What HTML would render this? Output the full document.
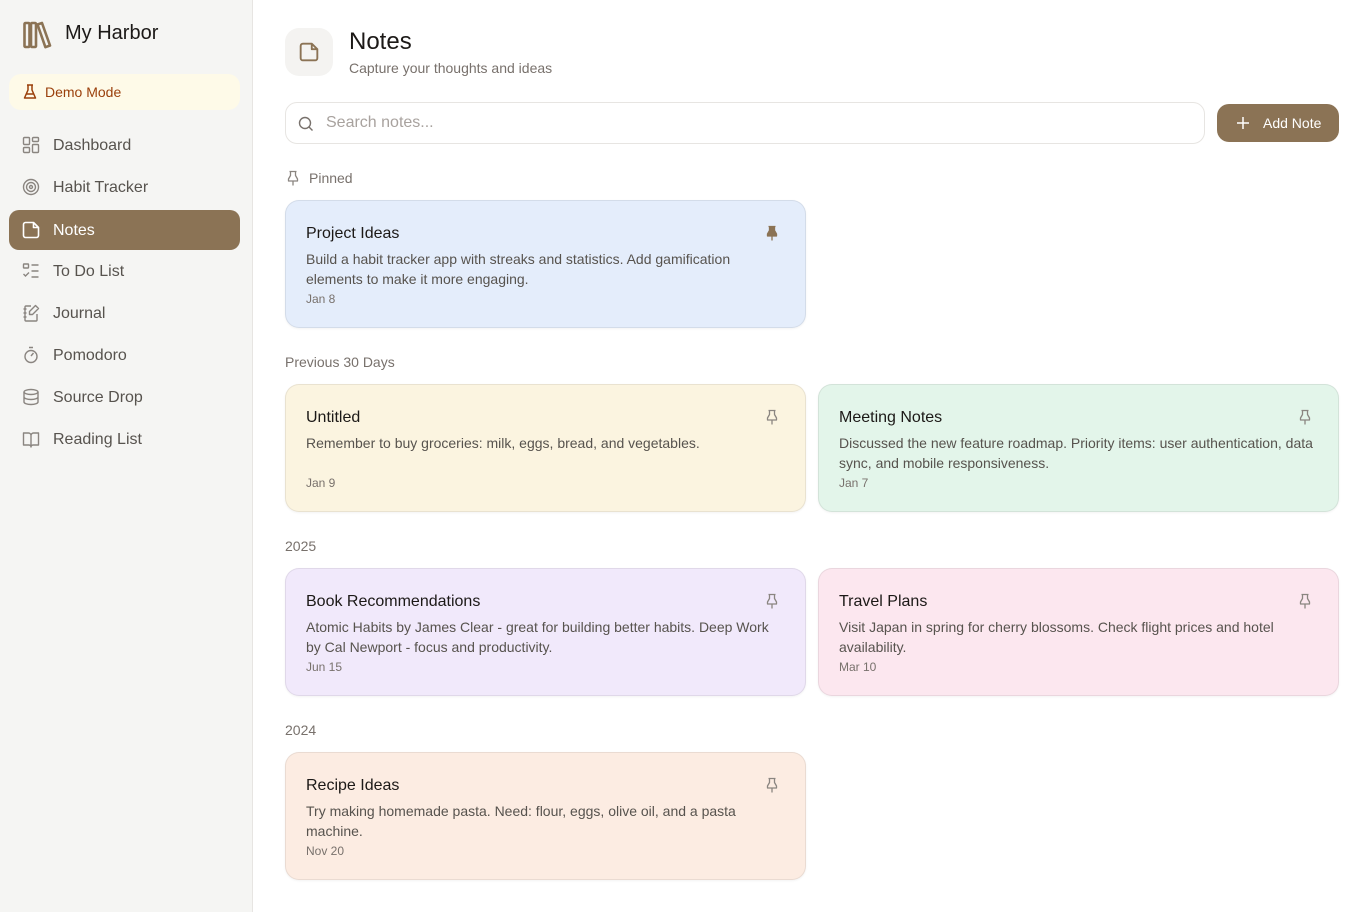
<!DOCTYPE html>
<html><head><meta charset="utf-8">
<style>
*{box-sizing:border-box;margin:0;padding:0}
body{width:1360px;height:912px;font-family:"Liberation Sans",sans-serif;background:#fff;position:relative;overflow:hidden;color:#1c1917}
.side{position:absolute;left:0;top:0;width:253px;height:912px;background:#f5f5f3;border-right:1px solid #e7e5e2}
.logo{position:absolute;left:22px;top:20px}
.brand{position:absolute;left:65px;top:22px;font-size:20px;color:#1c1917}
.demo{position:absolute;left:9px;top:74px;width:231px;height:36px;background:#fefae8;border-radius:12px;color:#9a3f0b;font-size:14px;padding:10px 0 0 36px}
.demo svg{position:absolute;left:14px;top:10px}
.nav{position:absolute;left:9px;width:231px;height:40px;border-radius:10px;font-size:16px;color:#57534e;padding:12px 0 0 44px}
.nav svg{position:absolute;left:13px;top:11px}
.nav.act{background:#8b7355;color:#fff}
.hicon{position:absolute;left:285px;top:28px;width:48px;height:48px;border-radius:14px;background:#f4f3f1}
.hicon svg{position:absolute;left:14px;top:14px}
h1{position:absolute;left:349px;top:28px;font-size:24px;font-weight:normal;color:#1c1917}
.sub{position:absolute;left:349px;top:60px;font-size:14px;color:#78716c}
.search{position:absolute;left:285px;top:102px;width:920px;height:42px;border:1px solid #e7e5e2;border-radius:12px;font-size:16px;color:#a8a29e;padding:11px 0 0 40px}
.search svg{position:absolute;left:12px;top:13px}
.btn{position:absolute;left:1217px;top:104px;width:122px;height:38px;background:#8b7355;border-radius:12px;color:#fff;font-size:14px;padding:11px 0 0 46px}
.btn svg{position:absolute;left:19px;top:12px}
.lbl{position:absolute;left:285px;font-size:14px;color:#78716c}
.card{position:absolute;width:521px;height:128px;border-radius:14px;border:1px solid rgba(0,0,0,0.07);box-shadow:0 1px 2px rgba(0,0,0,0.05);padding:0 20px}
.card .t{position:absolute;left:20px;top:24px;font-size:16px;color:#1c1917}
.card .b{position:absolute;left:20px;top:48px;width:480px;font-size:14px;line-height:20px;color:#57534e}
.card .d{position:absolute;left:20px;top:91px;font-size:12px;color:#78716c}
.card svg{position:absolute;left:479px;top:24px}
</style></head><body>
<div class="side">
 <svg class="logo" width="30" height="30" viewBox="0 0 30 30" fill="none" stroke="#8b7355" stroke-width="2.6" stroke-linejoin="round"><rect x="2.5" y="3" width="5" height="24" rx="1"/><rect x="9" y="3" width="5" height="24" rx="1"/><path d="M15.5 4.5l4.5-1.5 8 22.5-4.6 1.7z"/></svg>
 <div class="brand">My Harbor</div>
 <div class="demo"><svg width="14" height="16" viewBox="0 0 14 16" fill="none" stroke="#9a3f0b" stroke-width="1.5" stroke-linejoin="round"><path d="M4 1h6M5 1v5L1.5 14h11L9 6V1M3 10h8"/></svg>Demo Mode</div>
 <div class="nav" style="top:125px"><svg width="18" height="18" viewBox="0 0 18 18" fill="none" stroke="#8a8580" stroke-width="1.4"><rect x="1.5" y="1.5" width="6" height="7" rx="1"/><rect x="10.5" y="1.5" width="6" height="4" rx="1"/><rect x="10.5" y="8.5" width="6" height="8" rx="1"/><rect x="1.5" y="11.5" width="6" height="5" rx="1"/></svg>Dashboard</div>
 <div class="nav" style="top:167px"><svg width="18" height="18" viewBox="0 0 18 18" fill="none" stroke="#8a8580" stroke-width="1.4"><circle cx="9" cy="9" r="7.5"/><circle cx="9" cy="9" r="4.5"/><circle cx="9" cy="9" r="1.5"/></svg>Habit Tracker</div>
 <div class="nav act" style="top:210px"><svg width="18" height="18" viewBox="0 0 18 18" fill="none" stroke="#fff" stroke-width="1.6" stroke-linejoin="round"><path d="M3.5 1.5h8l5 5v8a2 2 0 0 1-2 2h-11a2 2 0 0 1-2-2v-11a2 2 0 0 1 2-2zM11.5 1.5v5h5"/></svg>Notes</div>
 <div class="nav" style="top:251px"><svg width="18" height="18" viewBox="0 0 18 18" fill="none" stroke="#8a8580" stroke-width="1.4"><rect x="1.5" y="2" width="5" height="4" rx="0.5"/><path d="M1.5 12l2 2 3.5-3.5M9.5 3h7M9.5 9h7M9.5 15h7"/></svg>To Do List</div>
 <div class="nav" style="top:293px"><svg width="18" height="18" viewBox="0 0 18 18" fill="none" stroke="#8a8580" stroke-width="1.4" stroke-linejoin="round"><path d="M9 2H4a1 1 0 0 0-1 1v13a1 1 0 0 0 1 1h10a1 1 0 0 0 1-1V10M1.5 5h3M1.5 9h3M1.5 13h3M13.5 1.5l3 3-6 6H7.5v-3z"/></svg>Journal</div>
 <div class="nav" style="top:335px"><svg width="18" height="18" viewBox="0 0 18 18" fill="none" stroke="#8a8580" stroke-width="1.4"><path d="M7 1.5h4M9 10l2.5-3"/><circle cx="9" cy="10.5" r="6"/></svg>Pomodoro</div>
 <div class="nav" style="top:377px"><svg width="18" height="18" viewBox="0 0 18 18" fill="none" stroke="#8a8580" stroke-width="1.4"><ellipse cx="9" cy="4" rx="7" ry="2.5"/><path d="M2 4v10c0 1.4 3.1 2.5 7 2.5s7-1.1 7-2.5V4M2 9c0 1.4 3.1 2.5 7 2.5s7-1.1 7-2.5"/></svg>Source Drop</div>
 <div class="nav" style="top:419px"><svg width="18" height="18" viewBox="0 0 18 18" fill="none" stroke="#8a8580" stroke-width="1.4" stroke-linejoin="round"><path d="M1.5 3h5a2.5 2.5 0 0 1 2.5 2.5V17a2 2 0 0 0-2-2H1.5zM16.5 3h-5A2.5 2.5 0 0 0 9 5.5V17a2 2 0 0 1 2-2h5.5z"/></svg>Reading List</div>
</div>

<div class="hicon"><svg width="20" height="20" viewBox="0 0 18 18" fill="none" stroke="#8b7355" stroke-width="1.7" stroke-linejoin="round"><path d="M3.5 1.5h8l5 5v8a2 2 0 0 1-2 2h-11a2 2 0 0 1-2-2v-11a2 2 0 0 1 2-2zM11.5 1.5v5h5"/></svg></div>
<h1>Notes</h1>
<div class="sub">Capture your thoughts and ideas</div>
<div class="search"><svg width="16" height="16" viewBox="0 0 16 16" fill="none" stroke="#78716c" stroke-width="1.4"><circle cx="7" cy="7" r="5.5"/><path d="M11 11l3.5 3.5"/></svg>Search notes...</div>
<div class="btn"><svg width="14" height="14" viewBox="0 0 14 14" stroke="#fff" stroke-width="1.5"><path d="M7 1v12M1 7h12"/></svg>Add Note</div>

<div class="lbl" style="top:170px;padding-left:24px"><svg style="position:absolute;left:1px;top:0" width="14" height="16" viewBox="0 0 14 16" fill="none" stroke="#8a8580" stroke-width="1.3" stroke-linejoin="round"><path d="M7 11v4.5M3.5 1.5h7M4.5 1.5v4L2.5 9v2h9V9l-2-3.5v-4"/></svg>Pinned</div>
<div class="lbl" style="top:354px">Previous 30 Days</div>
<div class="lbl" style="top:538px">2025</div>
<div class="lbl" style="top:722px">2024</div>

<div class="card" style="left:285px;top:200px;background:#e4edfb"><div class="t">Project Ideas</div><div class="b">Build a habit tracker app with streaks and statistics. Add gamification elements to make it more engaging.</div><div class="d" style="top:91px">Jan 8</div><svg width="14" height="16" viewBox="0 0 14 16" fill="#8b7355" stroke="#8b7355" stroke-width="1.3" stroke-linejoin="round"><path d="M7 11v4.5M3.5 1.5h7M4.5 1.5v4L2.5 9v2h9V9l-2-3.5v-4z"/></svg></div>

<div class="card" style="left:285px;top:384px;background:#fbf4e0"><div class="t">Untitled</div><div class="b">Remember to buy groceries: milk, eggs, bread, and vegetables.</div><div class="d">Jan 9</div><svg width="14" height="16" viewBox="0 0 14 16" fill="none" stroke="#8a8580" stroke-width="1.3" stroke-linejoin="round"><path d="M7 11v4.5M3.5 1.5h7M4.5 1.5v4L2.5 9v2h9V9l-2-3.5v-4"/></svg></div>
<div class="card" style="left:818px;top:384px;background:#e3f5ea"><div class="t">Meeting Notes</div><div class="b">Discussed the new feature roadmap. Priority items: user authentication, data sync, and mobile responsiveness.</div><div class="d">Jan 7</div><svg width="14" height="16" viewBox="0 0 14 16" fill="none" stroke="#8a8580" stroke-width="1.3" stroke-linejoin="round"><path d="M7 11v4.5M3.5 1.5h7M4.5 1.5v4L2.5 9v2h9V9l-2-3.5v-4"/></svg></div>

<div class="card" style="left:285px;top:568px;background:#f1e9fb"><div class="t">Book Recommendations</div><div class="b">Atomic Habits by James Clear - great for building better habits. Deep Work by Cal Newport - focus and productivity.</div><div class="d">Jun 15</div><svg width="14" height="16" viewBox="0 0 14 16" fill="none" stroke="#8a8580" stroke-width="1.3" stroke-linejoin="round"><path d="M7 11v4.5M3.5 1.5h7M4.5 1.5v4L2.5 9v2h9V9l-2-3.5v-4"/></svg></div>
<div class="card" style="left:818px;top:568px;background:#fce7ef"><div class="t">Travel Plans</div><div class="b">Visit Japan in spring for cherry blossoms. Check flight prices and hotel availability.</div><div class="d">Mar 10</div><svg width="14" height="16" viewBox="0 0 14 16" fill="none" stroke="#8a8580" stroke-width="1.3" stroke-linejoin="round"><path d="M7 11v4.5M3.5 1.5h7M4.5 1.5v4L2.5 9v2h9V9l-2-3.5v-4"/></svg></div>

<div class="card" style="left:285px;top:752px;background:#fcece2"><div class="t">Recipe Ideas</div><div class="b">Try making homemade pasta. Need: flour, eggs, olive oil, and a pasta machine.</div><div class="d">Nov 20</div><svg width="14" height="16" viewBox="0 0 14 16" fill="none" stroke="#8a8580" stroke-width="1.3" stroke-linejoin="round"><path d="M7 11v4.5M3.5 1.5h7M4.5 1.5v4L2.5 9v2h9V9l-2-3.5v-4"/></svg></div>
</body></html>
